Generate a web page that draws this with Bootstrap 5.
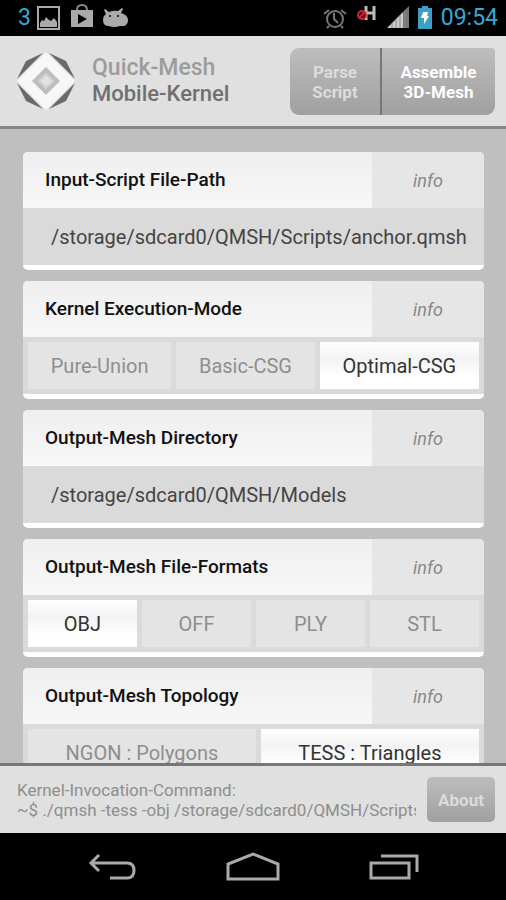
<!DOCTYPE html>
<html lang="en">
<head>
<meta charset="utf-8">
<meta name="viewport" content="width=device-width, initial-scale=1">
<title>Quick-Mesh Mobile-Kernel</title>
<link href="https://cdn.jsdelivr.net/npm/bootstrap@5.3.0/dist/css/bootstrap.min.css" rel="stylesheet">
<style>
  body { font-family: Roboto, "Liberation Sans", sans-serif; background: #bfbfbf; }
  svg { display: block; flex: none; }
  .status-bar { background: #000; color: #33a9d6; height: 36px; font-size: 23px; line-height: 36px; padding: 0 8px 0 18px; }
  .app-head { background: #e0e0e0; border-bottom: 3px solid #858585; height: 93px; }
  .brand-name { font-size: 23px; line-height: 26px; font-weight: 500; color: #9c9c9c; }
  .brand-name strong { font-size: 22px; font-weight: 500; color: #707070; }
  .act { border: 0; color: #fff; font-size: 17px; line-height: 20px; font-weight: 700; background: linear-gradient(#bdbdbd, #a0a0a0); border-radius: 9px; }
  .act.dim { color: #dcdcdc; }
  .act-group { padding: 12px 11px 11px 0; }
  .act-parse { width: 92px; border-radius: 9px 0 0 9px; border-right: 2px solid #777; }
  .act-mesh { width: 113px; border-radius: 0 4px 9px 0; }
  .act-about { width: 68px; height: 45px; border-radius: 5px; }
  .settings { padding: 23px 22px 0 23px; gap: 11px; min-height: 0; }
  .panel { border-radius: 5px; background: #fff; padding-bottom: 5px; overflow: hidden; flex: none; }
  .panel-head { height: 56px; background: linear-gradient(#efefef, #f7f7f7); }
  .panel-title { font-size: 19px; line-height: 24px; font-weight: 500; color: #111; padding-left: 22px; }
  .info-btn { width: 112px; border: 0; background: #e6e6e6; color: #888; font-size: 18px; font-style: italic; }
  .path-box { height: 57px; border: 0; background: #dadada; color: #444; font-size: 20px; padding: 0 12px 0 28px; width: 100%; }
  .choices { background: #dadada; height: 57px; padding: 5px; gap: 5px; }
  .choice { border: 0; background: #e4e4e4; color: #8e8e8e; font-size: 20px; padding: 0 22px; }
  .choice.picked { background: linear-gradient(#fff, #f3f3f3 35%, #fff 75%); color: #333; }
  .choices-even .choice { flex: 1 1 0; padding: 0; }
  .app-foot { background: #e0e0e0; border-top: 3px solid #777; height: 70px; padding: 0 11px 0 17px; gap: 11px; }
  .cmd { font-size: 17px; line-height: 20px; color: #8e8e8e; min-width: 0; }
  .nav-keys { background: #000; height: 67px; padding: 0 42px; }
  .nav-keys button { width: 141px; border: 0; background: none; }
</style>
<script src="https://cdn.jsdelivr.net/npm/bootstrap@5.3.0/dist/js/bootstrap.bundle.min.js"></script>
</head>
<body>
<div class="vh-100 d-flex flex-column overflow-hidden">
  <div class="status-bar d-flex align-items-center flex-shrink-0 justify-content-between">
    <div class="d-flex align-items-center">
      <span>3</span>
      <svg class="ms-1" width="96" height="36" viewBox="34 0 96 36" fill="#aaa" aria-hidden="true">
        <path d="M37 7h21v22H37z" fill="none" stroke="#aaa" stroke-width="2"/>
        <path d="M39 27v-4l2-3 2 1 2-4 3 3 2 1 3-3 3 4v5z"/>
        <path d="M70 10h22v17H70z"/><path d="M76 10q0-5 5-5t5 5" fill="none" stroke="#888" stroke-width="2"/><path d="M77 14v10l9-5z" fill="#000"/>
        <path d="M105 14l-2-4 1-1 4 3q5-2 9-1l4-3 1 1-2 4q7 2 7 7t-4 6h-4q-6 2-11 0-6 0-6-6 0-4 3-6z"/><circle cx="109" cy="16" r="1" fill="#000"/><circle cx="117" cy="16" r="1" fill="#000"/>
      </svg>
    </div>
    <div class="d-flex align-items-center">
      <svg width="112" height="36" viewBox="320 0 112 36" aria-hidden="true">
        <g fill="none" stroke="#777" stroke-width="2"><circle cx="334" cy="19" r="8"/><path d="M333 13v6l4 4M323 14l5-4M345 14l-5-4M328 26l-2 2M340 26l2 2"/></g>
        <path d="M365 6v14M373 6v14M365 13h8" fill="none" stroke="#bbb" stroke-width="3"/>
        <circle cx="361" cy="15" r="4" fill="#400" stroke="#d2203a" stroke-width="2"/><path d="M358 18l6-6" stroke="#d2203a" stroke-width="2"/>
        <path d="M386 28l16-16v16z" fill="#ccc"/><path d="M402 28V12l6-6v22z" fill="#777"/><path d="M391 23v5M395 19v9M399 15v13M404 10v18" stroke="#888"/>
        <path d="M417 8h4V6h6v2h4v21h-14z" fill="#3c9fc5"/><path d="M422 12h5l-1 4h2l-5 8v-6h-3z" fill="#fff"/>
      </svg>
      <span class="ms-2">09:54</span>
    </div>
  </div>

  <header class="app-head d-flex align-items-center flex-shrink-0 justify-content-between ps-3">
    <div class="d-flex align-items-center">
      <svg width="60" height="60" viewBox="0 0 60 60" aria-hidden="true">
        <path d="M27 2L10 10 1 28zM33 2l17 8 9 18zM1 32l9 18 17 8zM59 32l-9 18-17 8z" fill="#6a6a6a"/>
        <path d="M30 1l29 29-29 29L1 30z" fill="#f7f7f7"/>
        <path d="M30 16l14 14-14 14-14-14z" fill="#bdbdbd"/><path d="M30 23l7 7-7 7-7-7z" fill="#e2e2e2" stroke="#d2d2d2" stroke-width="2"/>
      </svg>
      <div class="brand-name ms-3">Quick-Mesh<br><strong>Mobile-Kernel</strong></div>
    </div>
    <div class="act-group d-flex align-self-stretch">
      <button type="button" class="act act-parse dim">Parse<br>Script</button>
      <button type="button" class="act act-mesh">Assemble<br>3D-Mesh</button>
    </div>
  </header>

  <main class="settings d-flex flex-column flex-grow-1 overflow-hidden">
    <section class="panel">
      <div class="panel-head d-flex align-items-center"><label for="script-path" class="panel-title flex-grow-1">Input-Script File-Path</label><button type="button" class="info-btn align-self-stretch">info</button></div>
      <input id="script-path" class="path-box d-block" type="text" value="/storage/sdcard0/QMSH/Scripts/anchor.qmsh">
    </section>
    <section class="panel">
      <div class="panel-head d-flex align-items-center"><h2 class="panel-title flex-grow-1 mb-0">Kernel Execution-Mode</h2><button type="button" class="info-btn align-self-stretch">info</button></div>
      <div class="choices d-flex"><button type="button" class="choice flex-grow-1">Pure-Union</button><button type="button" class="choice flex-grow-1">Basic-CSG</button><button type="button" class="choice picked flex-grow-1">Optimal-CSG</button></div>
    </section>
    <section class="panel">
      <div class="panel-head d-flex align-items-center"><label for="mesh-dir" class="panel-title flex-grow-1">Output-Mesh Directory</label><button type="button" class="info-btn align-self-stretch">info</button></div>
      <input id="mesh-dir" class="path-box d-block" type="text" value="/storage/sdcard0/QMSH/Models">
    </section>
    <section class="panel">
      <div class="panel-head d-flex align-items-center"><h2 class="panel-title flex-grow-1 mb-0">Output-Mesh File-Formats</h2><button type="button" class="info-btn align-self-stretch">info</button></div>
      <div class="choices choices-even d-flex"><button type="button" class="choice picked">OBJ</button><button type="button" class="choice">OFF</button><button type="button" class="choice">PLY</button><button type="button" class="choice">STL</button></div>
    </section>
    <section class="panel">
      <div class="panel-head d-flex align-items-center"><h2 class="panel-title flex-grow-1 mb-0">Output-Mesh Topology</h2><button type="button" class="info-btn align-self-stretch">info</button></div>
      <div class="choices d-flex"><button type="button" class="choice flex-grow-1">NGON : Polygons</button><button type="button" class="choice picked flex-grow-1">TESS : Triangles</button></div>
    </section>
  </main>

  <footer class="app-foot d-flex align-items-center flex-shrink-0">
    <div class="cmd flex-grow-1 overflow-hidden text-nowrap">Kernel-Invocation-Command:<br>~$ ./qmsh -tess -obj /storage/sdcard0/QMSH/Scripts</div>
    <button type="button" class="act act-about dim flex-shrink-0">About</button>
  </footer>

  <nav class="nav-keys d-flex flex-shrink-0 justify-content-between" aria-label="System">
    <button type="button" class="d-flex align-items-center justify-content-center p-0" aria-label="Back">
      <svg width="48" height="28" viewBox="0 0 48 28" fill="none" stroke="#aaa" stroke-width="3"><path d="M11 2L3 10l8 8M3 10h36q7 0 7 7.500T39 25H22"/></svg>
    </button>
    <button type="button" class="d-flex align-items-center justify-content-center p-0" aria-label="Home">
      <svg width="54" height="30" viewBox="0 0 54 30" fill="none" stroke="#aaa" stroke-width="3"><path d="M2 27V12L27 2l25 10v15z"/></svg>
    </button>
    <button type="button" class="d-flex align-items-center justify-content-center p-0" aria-label="Recent apps">
      <svg width="50" height="28" viewBox="0 0 50 28" fill="none" stroke="#aaa" stroke-width="3"><path d="M2 10h38v15H2zM12 3h36v16"/></svg>
    </button>
  </nav>
</div>
</body>
</html>
